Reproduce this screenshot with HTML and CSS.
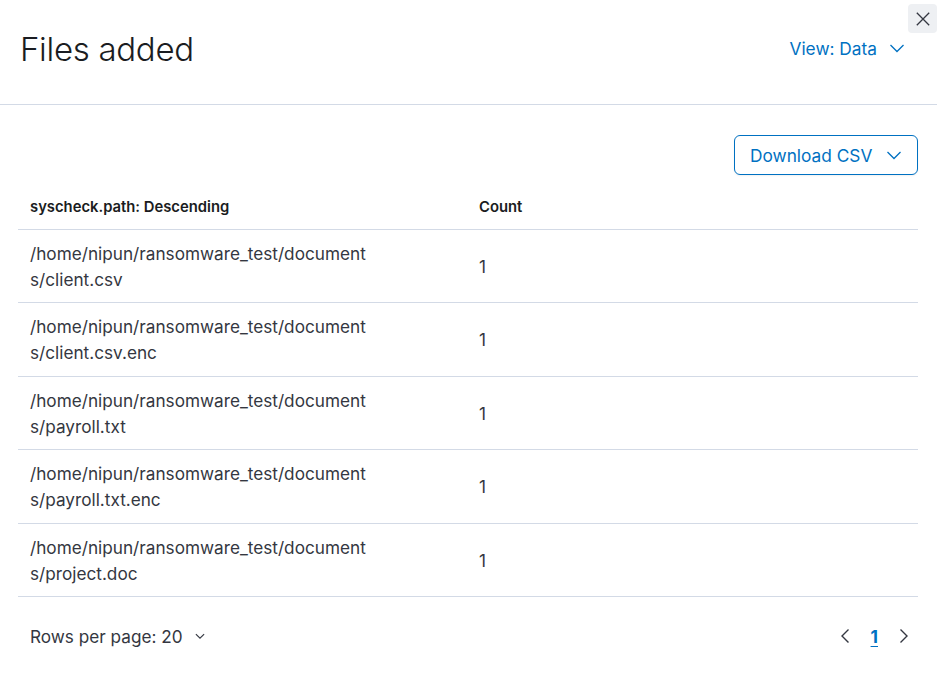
FILE: index.html
```html
<!DOCTYPE html>
<html>
<head>
<meta charset="utf-8">
<link rel="stylesheet" href="styles.css">
</head>
<body>
<div class="flyout">
  <button class="close" aria-label="Close">
    <svg width="16" height="16" viewBox="0 0 16 16"><path d="M1.8 1.8l12.4 12.4M14.2 1.8L1.8 14.2" stroke="#343741" stroke-width="1.3" fill="none"/></svg>
  </button>
  <header class="head">
    <h1 class="title">Files added</h1>
    <div class="view">View: Data
      <svg width="16" height="16" viewBox="0 0 16 16"><path d="M1.5 5l6.5 6.5 6.5-6.5" stroke="#0071c2" stroke-width="1.3" fill="none"/></svg>
    </div>
  </header>
  <main class="body">
    <div class="toolbar">
      <button class="download">Download CSV
        <svg width="16" height="16" viewBox="0 0 16 16"><path d="M1.5 5l6.5 6.5 6.5-6.5" stroke="#0071c2" stroke-width="1.3" fill="none"/></svg>
      </button>
    </div>
    <table class="table">
      <thead>
        <tr><th class="c1">syscheck.path: Descending</th><th>Count</th></tr>
      </thead>
      <tbody>
        <tr><td class="c1"><span class="path">/home/nipun/ransomware_test/documents/client.csv</span></td><td>1</td></tr>
        <tr><td class="c1"><span class="path">/home/nipun/ransomware_test/documents/client.csv.enc</span></td><td>1</td></tr>
        <tr><td class="c1"><span class="path">/home/nipun/ransomware_test/documents/payroll.txt</span></td><td>1</td></tr>
        <tr><td class="c1"><span class="path">/home/nipun/ransomware_test/documents/payroll.txt.enc</span></td><td>1</td></tr>
        <tr><td class="c1"><span class="path">/home/nipun/ransomware_test/documents/project.doc</span></td><td>1</td></tr>
      </tbody>
    </table>
    <div class="footer">
      <div class="rows">Rows per page: 20
        <svg width="12" height="12" viewBox="0 0 16 16"><path d="M2.5 5.5l5.5 5.5 5.5-5.5" stroke="#343741" stroke-width="1.5" fill="none"/></svg>
      </div>
      <div class="pager">
        <svg width="16" height="16" viewBox="0 0 16 16"><path d="M10.5 1.5l-6.5 6.5 6.5 6.5" stroke="#343741" stroke-width="1.4" fill="none"/></svg>
        <span class="page">1</span>
        <svg width="16" height="16" viewBox="0 0 16 16"><path d="M5.5 1.5l6.5 6.5-6.5 6.5" stroke="#343741" stroke-width="1.4" fill="none"/></svg>
      </div>
    </div>
  </main>
</div>
</body>
</html>
```
FILE: styles.css
```css
* { box-sizing: border-box; }
html, body { margin: 0; padding: 0; background: #fff; }
body {
  font-family: Inter, "Noto Sans", sans-serif;
  color: #343741;
  width: 937px;
  height: 698px;
  overflow: hidden;
}
.flyout { position: relative; width: 937px; }
.close {
  position: absolute;
  top: 4px;
  right: 0;
  width: 29px;
  height: 29px;
  border: none;
  border-radius: 4px;
  background: #eef0f3;
  display: flex;
  align-items: center;
  justify-content: center;
  padding: 0;
}
.head {
  height: 105px;
  border-bottom: 1px solid #d3dae6;
  display: flex;
  align-items: center;
  justify-content: space-between;
  padding: 0 32px 6px 20px;
}
.title {
  margin: 0;
  font-size: 33px;
  font-weight: 300;
  color: #1a1c21;
  letter-spacing: -0.3px;
}
.view {
  display: flex;
  align-items: center;
  gap: 12px;
  font-size: 17.3px;
  color: #0071c2;
  padding-bottom: 2px;
}
.body { padding: 30px 19px 0 18px; }
.toolbar { display: flex; justify-content: flex-end; }
.download {
  height: 40px;
  width: 184px;
  border: 1px solid #0071c2;
  border-radius: 6px;
  background: #fff;
  color: #0071c2;
  font-family: Inter, "Noto Sans", sans-serif;
  font-size: 17.3px;
  display: flex;
  align-items: center;
  justify-content: space-between;
  padding: 0 15px;
  box-shadow: 0 1px 2px rgba(0,0,0,0.06);
}
.table {
  width: 100%;
  border-collapse: collapse;
  margin-top: 14px;
}
.table th {
  text-align: left;
  font-size: 14.8px;
  font-weight: 600;
  color: #1a1c21;
  height: 40px;
  padding: 0 12px 4px;
  border-bottom: 1px solid #d3dae6;
}
.table th.c1, .table td.c1 { width: 449px; }
.table td {
  font-size: 17.2px;
  line-height: 26px;
  height: 73.5px;
  padding: 11px 12px 9px;
  border-bottom: 1px solid #d3dae6;
  vertical-align: middle;
}
.path {
  display: block;
  width: 345px;
  word-break: break-all;
}
.footer {
  display: flex;
  justify-content: space-between;
  align-items: center;
  height: 78px;
  padding: 0 7px 0 12px;
}
.rows {
  display: flex;
  align-items: center;
  gap: 11px;
  font-size: 17.2px;
}
.pager {
  display: flex;
  align-items: center;
  gap: 17px;
}
.page {
  color: #0071c2;
  font-weight: 700;
  font-size: 17.2px;
  text-decoration: underline;
  text-underline-offset: 3px;
}
```
